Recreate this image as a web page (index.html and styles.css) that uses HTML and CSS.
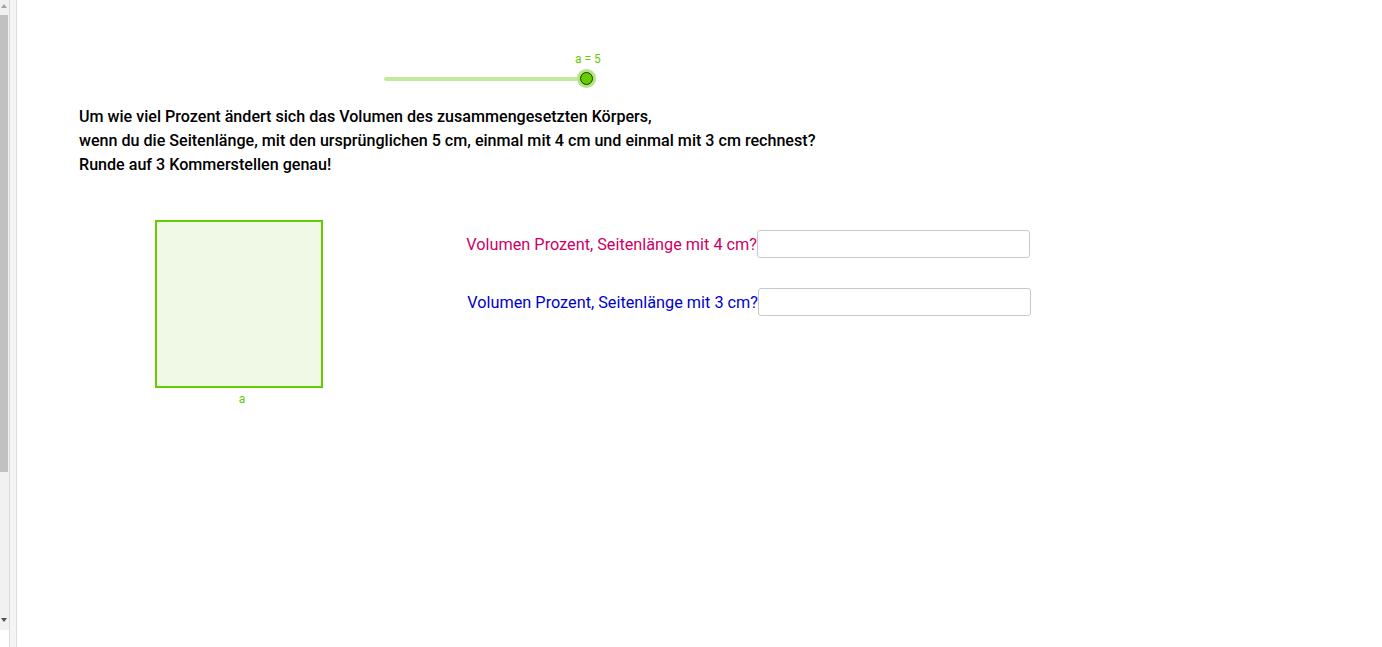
FILE: index.html
```html
<!DOCTYPE html>
<html lang="de">
<head>
<meta charset="utf-8">
<title>Volumen</title>
<link rel="stylesheet" href="styles.css">
</head>
<body>
<div class="page">
  <aside class="side">
    <div class="scroll">
      <div class="arrow up"></div>
      <div class="thumb"></div>
      <div class="track-rest"></div>
      <div class="arrow down"></div>
    </div>
    <div class="line"></div>
    <div class="strip"></div>
    <div class="line"></div>
  </aside>
  <main class="canvas">
    <div class="slider">
      <div class="slider-label">a = 5</div>
      <div class="slider-track"></div>
      <div class="slider-knob"></div>
    </div>
    <div class="task">
      <p>Um wie viel Prozent ändert sich das Volumen des zusammengesetzten Körpers,</p>
      <p>wenn du die Seitenlänge, mit den ursprünglichen 5 cm, einmal mit 4 cm und einmal mit 3 cm rechnest?</p>
      <p>Runde auf 3 Kommerstellen genau!</p>
    </div>
    <div class="work">
      <div class="figure">
        <div class="square"></div>
        <div class="square-label">a</div>
      </div>
      <div class="questions">
        <div class="q q4">
          <label class="q-label">Volumen Prozent, Seitenlänge mit 4 cm?</label>
          <input class="q-input" type="text">
        </div>
        <div class="q q3">
          <label class="q-label">Volumen Prozent, Seitenlänge mit 3 cm?</label>
          <input class="q-input" type="text">
        </div>
      </div>
    </div>
  </main>
</div>
</body>
</html>
```
FILE: styles.css
```css
html, body {
  margin: 0;
  padding: 0;
  background: #ffffff;
  font-family: Roboto, "Liberation Sans", sans-serif;
}
.page {
  display: flex;
  width: 1382px;
  height: 647px;
  overflow: hidden;
}
.side {
  display: flex;
  flex: 0 0 17px;
  height: 647px;
}
.scroll {
  width: 9px;
  display: flex;
  flex-direction: column;
  position: relative;
}
.arrow {
  height: 15px;
  background: #f1f1f1;
  position: relative;
}
.arrow.up::after {
  content: "";
  position: absolute;
  left: 1px;
  top: 4px;
  border-left: 3px solid transparent;
  border-right: 3px solid transparent;
  border-bottom: 4px solid #a3a3a3;
}
.arrow.down {
  height: 17px;
}
.arrow.down::after {
  content: "";
  position: absolute;
  left: 1px;
  top: 5px;
  border-left: 3px solid transparent;
  border-right: 3px solid transparent;
  border-top: 4px solid #505050;
}
.thumb {
  height: 457px;
  width: 8px;
  background: #c1c1c1;
  box-shadow: 1px 0 0 #f1f1f1;
}
.track-rest {
  height: 141px;
  background: #f1f1f1;
}
.scroll::after {
  content: "";
  display: block;
  height: 17px;
  background: #ffffff;
}
.line {
  width: 1px;
  background: #dcdcdc;
}
.strip {
  width: 6px;
  background: #f5f5f5;
}
.canvas {
  flex: 1;
  position: relative;
}
.slider {
  position: relative;
  margin-left: 367px;
  padding-top: 52px;
  width: 212px;
  height: 32px;
}
.slider-label {
  position: absolute;
  left: 191px;
  top: 52px;
  font-size: 12px;
  line-height: 14px;
  color: #66cc00;
  white-space: nowrap;
}
.slider-track {
  position: absolute;
  left: 0;
  top: 77px;
  width: 212px;
  height: 4px;
  border-radius: 2px;
  background: #c3ea9f;
}
.slider-knob {
  position: absolute;
  left: 196px;
  top: 72px;
  width: 11px;
  height: 11px;
  border-radius: 50%;
  background: #66cc00;
  border: 1px solid #1f3300;
  box-shadow: 0 0 0 3px #b2e680;
}
.task {
  margin: 21px 0 0 62px;
  font-weight: 500;
  font-size: 16.1px;
  line-height: 24px;
  color: #000000;
}
.task p {
  margin: 0;
  white-space: nowrap;
}
.work {
  display: flex;
  margin-top: 43px;
}
.figure {
  margin-left: 138px;
  display: flex;
  flex-direction: column;
  align-items: center;
  width: 168px;
}
.square {
  box-sizing: border-box;
  width: 168px;
  height: 168px;
  border: 2px solid #66cc00;
  background: #f0f9e6;
}
.square-label {
  margin-top: 4px;
  margin-left: 6px;
  font-size: 12px;
  line-height: 14px;
  color: #66cc00;
}
.questions {
  display: flex;
  flex-direction: column;
  gap: 31px;
  margin-top: 10px;
  margin-left: -1px;
  width: 708px;
}
.q {
  display: flex;
  align-items: center;
  justify-content: flex-end;
  height: 27px;
}
.q3 {
  width: 709px;
}
.q-label {
  font-size: 16.25px;
  line-height: 20px;
  white-space: nowrap;
  padding-top: 3px;
}
.q4 .q-label {
  color: #cc0066;
}
.q3 .q-label {
  color: #0000cc;
}
.q-input {
  box-sizing: border-box;
  width: 273px;
  height: 28px;
  margin: 0;
  border: 1px solid #c8c8c8;
  border-radius: 3px;
  background: #ffffff;
  outline: none;
}
```
